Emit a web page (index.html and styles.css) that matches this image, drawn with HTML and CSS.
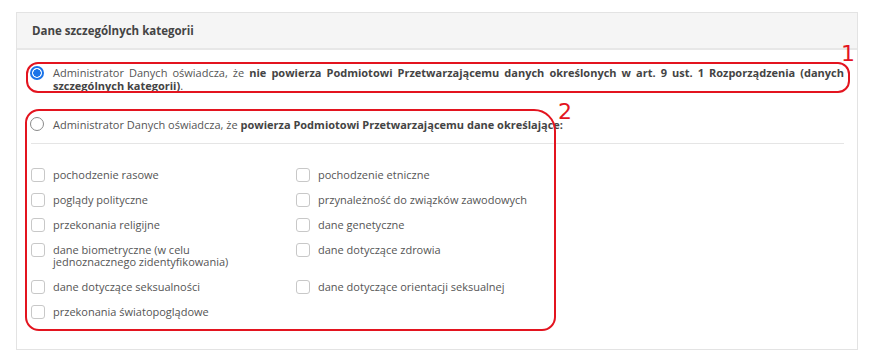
FILE: index.html
```html
<!DOCTYPE html>
<html>
	<head>
		<meta charset="UTF-8">
		<title>Dane szczególnych kategorii</title>
		<link rel="stylesheet" href="styles.css">
	</head>
	<body>
		<div class="panel">
			<div class="panel-head">Dane szczególnych kategorii</div>
			<div class="panel-body">
				<!-- opcja 1 -->
				<label class="opt opt-first">
					<input type="radio" name="szczeg" class="radio" checked>
					<span class="opt-text">Administrator Danych oświadcza, że <b>nie powierza Podmiotowi Przetwarzającemu danych określonych w art. 9 ust. 1 Rozporządzenia (danych szczególnych kategorii)</b>.</span>
				</label>

				<!-- opcja 2 -->
				<label class="opt opt-second">
					<input type="radio" name="szczeg" class="radio">
					<span class="opt-text">Administrator Danych oświadcza, że <b>powierza Podmiotowi Przetwarzającemu dane określające:</b></span>
				</label>
				<hr class="sep">

				<div class="cats">
					<label class="cat"><input type="checkbox" class="check"><span>pochodzenie rasowe</span></label>
					<label class="cat"><input type="checkbox" class="check"><span>pochodzenie etniczne</span></label>
					<label class="cat"><input type="checkbox" class="check"><span>poglądy polityczne</span></label>
					<label class="cat"><input type="checkbox" class="check"><span>przynależność do związków zawodowych</span></label>
					<label class="cat"><input type="checkbox" class="check"><span>przekonania religijne</span></label>
					<label class="cat"><input type="checkbox" class="check"><span>dane genetyczne</span></label>
					<label class="cat"><input type="checkbox" class="check"><span>dane biometryczne (w celu jednoznacznego zidentyfikowania)</span></label>
					<label class="cat"><input type="checkbox" class="check"><span>dane dotyczące zdrowia</span></label>
					<label class="cat"><input type="checkbox" class="check"><span>dane dotyczące seksualności</span></label>
					<label class="cat"><input type="checkbox" class="check"><span>dane dotyczące orientacji seksualnej</span></label>
					<label class="cat"><input type="checkbox" class="check"><span>przekonania światopoglądowe</span></label>
				</div>

				<!-- zaznaczenia na zrzucie -->
				<div class="mark mark-1"></div>
				<div class="mark-num mark-num-1">1</div>
				<div class="mark mark-2"></div>
				<div class="mark-num mark-num-2">2</div>
			</div>
		</div>
	</body>
</html>
```

FILE: styles.css
```css
body{margin: 0; background: #fff; font-family: "Open Sans", "Noto Sans", sans-serif; font-size: 11px; color: #555;}
.panel{margin: 12px 0 0 16px; width: 842px; height: 338px; border: 1px solid #e3e3e3; box-sizing: border-box;}
.panel-head{height: 35px; line-height: 35px; padding-left: 15px; background: #f5f5f5;
		border-bottom: 2px solid #e7e7e7; font-weight: bold; font-size: 11.5px; color: #444;}
.panel-body{position: relative; padding: 16px 13px 0 13px;}

.opt{display: flex; align-items: flex-start; gap: 9px; line-height: 13px;}
.opt-text{flex: 1; text-align: justify;}
.opt b{color: #444;}
.opt-second{margin-top: 25px; align-items: center;}

.radio{appearance: none; margin: 0; width: 14px; height: 14px; flex: none; border: 1px solid #8a8a8a;
		border-radius: 50%; background: #fff; box-sizing: border-box;}
.radio:checked{border: 2px solid #1a73e8; background: radial-gradient(circle, #1a73e8 0 3.5px, #fff 4px);}

.sep{margin: 12px 0 0 1px; border: 0; border-top: 1px solid #e5e5e5;}

.cats{display: grid; grid-template-columns: 265px 265px; row-gap: 13px; padding: 25px 0 0 1px;}
.cat{display: flex; align-items: flex-start; gap: 8px; line-height: 12px;}
.cat span{max-width: 210px;}
.check{appearance: none; margin: -1px 0 -1px; width: 14px; height: 14px; flex: none; border: 1px solid #c8c8c8;
		border-radius: 3px; background: #fff; box-sizing: border-box;}

.mark{position: absolute; border: 2px solid #e3141f; border-radius: 12px; pointer-events: none;}
.mark-1{left: 9px; top: 12px; width: 820px; height: 27px;}
.mark-2{left: 8px; top: 59px; width: 527px; height: 218px; border-radius: 14px 22px 14px 14px;}
.mark-num{position: absolute; color: #e3141f; font-family: "DejaVu Sans", sans-serif; font-size: 22px; line-height: 22px;}
.mark-num-1{left: 824px; top: -7px;}
.mark-num-2{left: 541px; top: 51px;}
```
